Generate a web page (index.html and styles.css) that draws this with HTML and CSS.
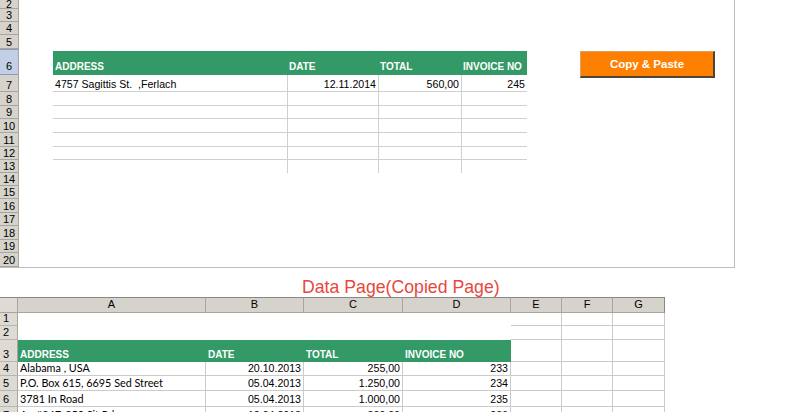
FILE: index.html
```html
<!DOCTYPE html>
<html>
<head>
<meta charset="utf-8">
<link rel="stylesheet" href="styles.css">
</head>
<body>
<div class="top">
  <div class="rowhdr">
    <div class="rh r9">2</div>
    <div class="rh r13">3</div>
    <div class="rh r13">4</div>
    <div class="rh r14">5</div>
    <div class="rh r26 sel">6</div>
    <div class="rh r17">7</div>
    <div class="rh r14">8</div>
    <div class="rh r13">9</div>
    <div class="rh r14">10</div>
    <div class="rh r14">11</div>
    <div class="rh r13">12</div>
    <div class="rh r13">13</div>
    <div class="rh r13">14</div>
    <div class="rh r13">15</div>
    <div class="rh r14">16</div>
    <div class="rh r13">17</div>
    <div class="rh r14">18</div>
    <div class="rh r13">19</div>
    <div class="rh r14">20</div>
  </div>
  <div class="canvas">
    <div class="inv">
      <div class="hd">ADDRESS</div>
      <div class="hd">DATE</div>
      <div class="hd">TOTAL</div>
      <div class="hd">INVOICE NO</div>

      <div class="c">4757 Sagittis St.&nbsp;&nbsp;,Ferlach</div>
      <div class="c v num">12.11.2014</div>
      <div class="c v num">560,00</div>
      <div class="c v num">245</div>

      <div class="c"></div><div class="c v"></div><div class="c v"></div><div class="c v"></div>
      <div class="c"></div><div class="c v"></div><div class="c v"></div><div class="c v"></div>
      <div class="c"></div><div class="c v"></div><div class="c v"></div><div class="c v"></div>
      <div class="c"></div><div class="c v"></div><div class="c v"></div><div class="c v"></div>
      <div class="c"></div><div class="c v"></div><div class="c v"></div><div class="c v"></div>
      <div class="c last"></div><div class="c v last"></div><div class="c v last"></div><div class="c v last"></div>
    </div>
    <button class="btn">Copy &amp; Paste</button>
  </div>
</div>

<div class="title">Data Page(Copied Page)</div>

<div class="sheet">
  <div class="ch corner"></div>
  <div class="ch">A</div>
  <div class="ch">B</div>
  <div class="ch">C</div>
  <div class="ch">D</div>
  <div class="ch">E</div>
  <div class="ch">F</div>
  <div class="ch end">G</div>

  <div class="rn">1</div>
  <div class="merged"></div>
  <div class="g"></div><div class="g"></div><div class="g"></div>

  <div class="rn">2</div>
  <div class="g"></div><div class="g"></div><div class="g"></div>

  <div class="rn">3</div>
  <div class="gh addr">ADDRESS</div>
  <div class="gh">DATE</div>
  <div class="gh">TOTAL</div>
  <div class="gh">INVOICE NO</div>
  <div class="g"></div><div class="g"></div><div class="g"></div>

  <div class="rn">4</div>
  <div class="g txt">Alabama , USA</div>
  <div class="g num">20.10.2013</div>
  <div class="g num">255,00</div>
  <div class="g num">233</div>
  <div class="g"></div><div class="g"></div><div class="g"></div>

  <div class="rn">5</div>
  <div class="g txt">P.O. Box 615, 6695 Sed Street</div>
  <div class="g num">05.04.2013</div>
  <div class="g num">1.250,00</div>
  <div class="g num">234</div>
  <div class="g"></div><div class="g"></div><div class="g"></div>

  <div class="rn">6</div>
  <div class="g txt">3781 In Road</div>
  <div class="g num">05.04.2013</div>
  <div class="g num">1.000,00</div>
  <div class="g num">235</div>
  <div class="g"></div><div class="g"></div><div class="g"></div>

  <div class="rn">7</div>
  <div class="g txt">Ap #867-859 Sit Rd.</div>
  <div class="g num">12.04.2013</div>
  <div class="g num">300,00</div>
  <div class="g num">236</div>
  <div class="g"></div><div class="g"></div><div class="g"></div>
</div>
</body>
</html>
```

FILE: styles.css
```css
html, body {
  margin: 0;
  padding: 0;
  height: 412px;
  overflow: hidden;
  background: #ffffff;
  font-family: "Liberation Sans", Arial, sans-serif;
  color: #000;
}

/* ---------- top sheet ---------- */
.top {
  display: flex;
  width: 735px;
  height: 268px;
  box-sizing: border-box;
  border-right: 1px solid #bdbdbd;
  border-bottom: 1px solid #bdbdbd;
}

.rowhdr {
  width: 18px;
  display: flex;
  flex-direction: column;
  background: #d6d3cc;
  border-right: 1px solid #a9a59d;
}

.rh {
  box-sizing: border-box;
  border-bottom: 1px solid #a9a59d;
  font-size: 11px;
  line-height: 12px;
  text-align: center;
  display: flex;
  align-items: flex-end;
  justify-content: center;
}
.r9 { height: 9px; line-height: 8px; font-size: 10.5px; }
.r13 { height: 13px; }
.r14 { height: 14px; }
.r17 { height: 17px; }
.r26 { height: 26px; }
.rh.sel {
  background: #c3cfe6;
  border-top: 1px solid #8d9bbf;
  border-bottom: 1px solid #8d9bbf;
  padding-bottom: 2px;
}

.canvas {
  flex: 1;
  display: flex;
  align-items: flex-start;
  padding: 51px 0 0 34px;
}

.inv {
  display: grid;
  grid-template-columns: 234px 91px 83px 66px;
  grid-template-rows: 24px 17px 14px 13px 14px 14px 13px 13px;
}

.hd {
  background: #339966;
  color: #ffffff;
  font-weight: bold;
  font-size: 10px;
  line-height: 12px;
  display: flex;
  align-items: flex-end;
  padding: 0 0 2px 2px;
}

.c {
  box-sizing: border-box;
  border-bottom: 1px solid #cfcfcf;
  font-size: 10.6px;
  line-height: 12px;
  display: flex;
  align-items: flex-end;
  padding: 0 2px 1px 2px;
  white-space: pre;
}
.c.v { border-left: 1px solid #cfcfcf; }
.c.last { border-bottom: none; }
.c.num { justify-content: flex-end; }

.btn {
  margin-left: 53px;
  width: 135px;
  height: 27px;
  box-sizing: border-box;
  background: #ff8000;
  color: #ffffff;
  font-family: "Liberation Sans", Arial, sans-serif;
  font-weight: bold;
  font-size: 11.5px;
  border-top: 1px solid #e0a060;
  border-left: 1px solid #e0a060;
  border-right: 2px solid #4f4438;
  border-bottom: 2px solid #4f4438;
  padding: 0;
  cursor: pointer;
}

/* ---------- title ---------- */
.title {
  height: 29px;
  box-sizing: border-box;
  padding: 9px 0 0 302px;
  font-size: 17.7px;
  line-height: 20px;
  color: #e8473d;
}

/* ---------- bottom sheet ---------- */
.sheet {
  display: grid;
  width: 665px;
  grid-template-columns: 18px 188px 98px 99px 108px 51px 51px 52px;
  grid-template-rows: 16px 13px 14px 22px 14px 15px 16px 16px;
}

.ch {
  box-sizing: border-box;
  background: #d6d3cc;
  border-top: 1px solid #8a8780;
  border-right: 1px solid #a9a59d;
  border-bottom: 1px solid #a9a59d;
  font-size: 11px;
  line-height: 13px;
  text-align: center;
}
.ch.corner { background: #dedbd4; }
.ch.end { border-right: 1px solid #8a8780; }

.rn {
  box-sizing: border-box;
  background: #dedbd5;
  border-right: 1px solid #a9a59d;
  border-bottom: 1px solid #b9b6ae;
  font-size: 11px;
  line-height: 12px;
  display: flex;
  align-items: flex-end;
  padding: 0 0 1px 3px;
}

.merged {
  grid-column: 2 / 6;
  grid-row: 2 / 4;
  background: #ffffff;
}

.g {
  box-sizing: border-box;
  border-right: 1px solid #cbcbcb;
  border-bottom: 1px solid #cbcbcb;
  display: flex;
  align-items: flex-end;
  padding: 0 2px 1px 2px;
  font-size: 10.6px;
  line-height: 12px;
  white-space: nowrap;
  overflow: hidden;
}
.g.num { justify-content: flex-end; }
.g.txt {
  font-family: Lato, "Liberation Sans", sans-serif;
  font-size: 10.8px;
}

.gh {
  background: #339966;
  color: #ffffff;
  font-weight: bold;
  font-size: 10px;
  line-height: 12px;
  display: flex;
  align-items: flex-end;
  padding: 0 0 1px 2px;
}
```
